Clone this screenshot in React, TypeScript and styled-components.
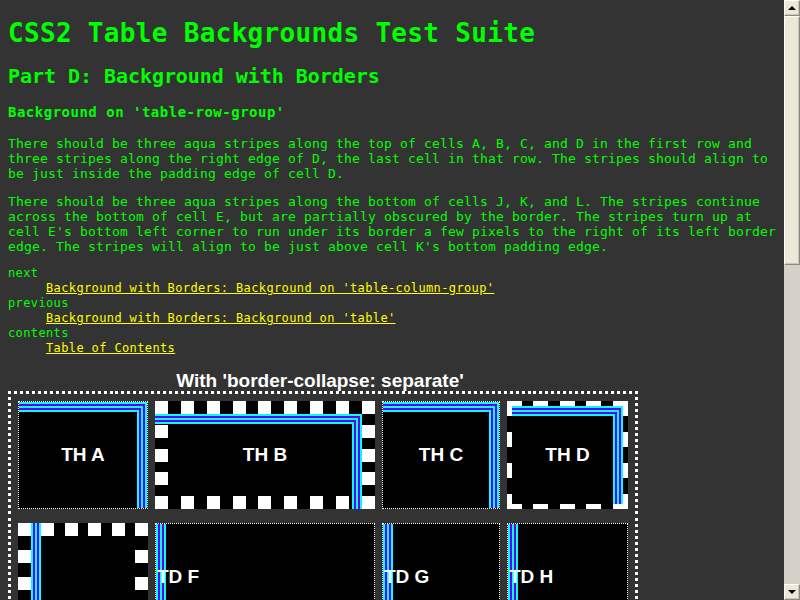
import styled, { createGlobalStyle } from "styled-components";

const CYAN = "#00ffff";
const VIOLET = "#6600ee";
const BANDS = [CYAN, VIOLET, CYAN, VIOLET, CYAN];

type Edge = "dotted" | "checker" | "dashed";
type Stripes = "corner" | "left";

interface CellSpec {
  id: string;
  label: string;
  head?: boolean;
  w: number;
  h: number;
  edge: Edge;
  stripes: Stripes;
  span?: number;
}

const EDGE_WIDTH: Record<Edge, number> = { dotted: 1, checker: 13, dashed: 5 };
const DASH: Record<Edge, number> = { dotted: 1, checker: 13, dashed: 15 };

const solid = (c: string) => `linear-gradient(${c}, ${c})`;

// evenly spaced dashes that start and end on a dash, like the old gecko borders
function dashEdges(w: number, h: number, bw: number, dash: number, color: string) {
  const period = (len: number) => {
    const n = Math.max(2, Math.round((len + dash) / (2 * dash)));
    return (len - dash) / (n - 1);
  };
  const hz = `repeating-linear-gradient(to right, ${color} 0 ${dash}px, transparent ${dash}px ${period(w)}px)`;
  const vt = `repeating-linear-gradient(to bottom, ${color} 0 ${dash}px, transparent ${dash}px ${period(h)}px)`;
  return [
    `${hz} 0 0 / 100% ${bw}px no-repeat`,
    `${hz} 0 100% / 100% ${bw}px no-repeat`,
    `${vt} 0 0 / ${bw}px 100% no-repeat`,
    `${vt} 100% 0 / ${bw}px 100% no-repeat`,
  ];
}

// three aqua stripes turning the top-right corner
function cornerStripes(t: number, r: number, l: number, b: number) {
  const layers = [
    `${solid("#000")} ${l}px ${t + 10}px / calc(100% - ${l + r + 10}px) calc(100% - ${t + b + 10}px) no-repeat`,
  ];
  for (let k = 4; k >= 0; k--) {
    layers.push(
      `${solid(BANDS[k])} ${l}px ${t + 2 * k}px / calc(100% - ${l + r + 2 * k}px) calc(100% - ${t + b + 2 * k}px) no-repeat`
    );
  }
  return layers;
}

function leftStripes(l: number, t: number, b: number) {
  const stops = BANDS.map((c, i) => `${c} ${i * 2}px ${i * 2 + 2}px`).join(", ");
  return [`linear-gradient(to right, ${stops}) ${l}px ${t}px / 10px calc(100% - ${t + b}px) no-repeat`];
}

function cellBackground(p: { $w: number; $h: number; $edge: Edge; $stripes: Stripes }) {
  const bw = EDGE_WIDTH[p.$edge];
  const border = p.$edge === "dotted" ? [] : dashEdges(p.$w, p.$h, bw, DASH[p.$edge], "#fff");
  let stripes: string[];
  if (p.$stripes === "left") {
    stripes = p.$edge === "dotted" ? leftStripes(1, 1, 1) : leftStripes(bw, 0, 0);
  } else if (p.$edge === "dotted") {
    stripes = cornerStripes(1, 1, 1, 1);
  } else if (p.$edge === "checker") {
    stripes = cornerStripes(bw, bw, 0, 0);
  } else {
    stripes = cornerStripes(bw, bw, bw, 0);
  }
  return [...border, ...stripes].join(",\n");
}

const tableOutline = dashEdges(630, 250, 3, 3, "#fff").join(",\n");

const GlobalStyle = createGlobalStyle`
  html, body {
    margin: 0;
    padding: 0;
    height: 100%;
    overflow: hidden;
    background: #333333;
  }
  #root {
    height: 100%;
  }
`;

const Window = styled.div`
  display: flex;
  height: 100vh;
  overflow: hidden;
  background: #333333;
`;

const Page = styled.main`
  flex: 1;
  min-width: 0;
  padding: 0 8px;
  overflow: hidden;
  color: #00ff00;
  font-family: "DejaVu Sans Mono", "Liberation Mono", monospace;
`;

const Title = styled.h1`
  margin: 18px 0 0;
  font-size: 26px;
  line-height: 30px;
  letter-spacing: 0.32px;
  font-weight: bold;
`;

const Part = styled.h2`
  margin: 16px 0 0;
  font-size: 20px;
  line-height: 24px;
  letter-spacing: -0.05px;
  font-weight: bold;
`;

const Section = styled.h3`
  margin: 16px 0 0;
  font-size: 14px;
  line-height: 17px;
  letter-spacing: 0.5px;
  font-weight: bold;
`;

const Para = styled.p`
  margin: 15px 0 0;
  font-size: 13px;
  line-height: 15px;
  letter-spacing: 0.173px;

  & + & {
    margin-top: 13px;
  }
`;

const NavList = styled.dl`
  margin: 12px 0 0;
  font-size: 12px;
  line-height: 15px;
  letter-spacing: 0.375px;

  dt {
    margin: 0;
  }
  dd {
    margin: 0 0 0 38px;
  }
`;

const NavLink = styled.a`
  color: #ffff00;
  text-decoration: underline;
`;

const Figure = styled.div`
  width: max-content;
  margin-top: 14px;
`;

const Caption = styled.div`
  text-align: center;
  padding-right: 6px;
  font-family: "Liberation Sans", Arial, sans-serif;
  font-weight: bold;
  font-size: 19px;
  line-height: 21px;
  color: #ffffff;
`;

const Table = styled.div`
  display: grid;
  grid-template-columns: 130px 220px 118px 121px;
  grid-template-rows: repeat(3, 108px);
  column-gap: 7px;
  row-gap: 14px;
  padding: 7px;
  border: 3px solid transparent;
  background: ${tableOutline};
  background-origin: border-box;
  background-clip: border-box;
`;

const Cell = styled.div<{ $w: number; $h: number; $edge: Edge; $stripes: Stripes; $head?: boolean; $span?: number }>`
  box-sizing: border-box;
  grid-row: span ${(p) => p.$span ?? 1};
  display: flex;
  align-items: center;
  justify-content: ${(p) => (p.$head ? "center" : "flex-start")};
  padding: 1px;
  border: ${(p) => (p.$edge === "dotted" ? "1px dotted #ffffff" : `${EDGE_WIDTH[p.$edge]}px solid transparent`)};
  background: ${(p) => cellBackground(p)};
  background-color: #000000;
  background-origin: border-box;
  background-clip: border-box;
  color: #ffffff;
  font-family: "Liberation Sans", Arial, sans-serif;
  font-weight: bold;
  font-size: 19px;
  line-height: 22px;
  white-space: nowrap;
`;

const Scrollbar = styled.div`
  flex: none;
  width: 16px;
  display: flex;
  flex-direction: column;
  background: #d5d1c9;
`;

const Raised = styled.div`
  box-sizing: border-box;
  flex: none;
  background: #ece9d8;
  border: 1px solid;
  border-color: #ffffff #8c8a80 #8c8a80 #ffffff;
  box-shadow: inset -1px -1px 0 #c9c6b8;
`;

const ArrowButton = styled(Raised)`
  height: 16px;
  display: flex;
  align-items: center;
  justify-content: center;
`;

const Arrow = styled.span<{ $down?: boolean }>`
  width: 0;
  height: 0;
  border-left: 4px solid transparent;
  border-right: 4px solid transparent;
  ${(p) => (p.$down ? "border-top: 4px solid #000;" : "border-bottom: 4px solid #000;")}
`;

const Thumb = styled(Raised)`
  height: 249px;
`;

const Track = styled.div`
  flex: 1;
`;

// cell E spans two rows; its label sits below the fold, so it stays empty here
const cells: CellSpec[] = [
  { id: "a", label: "TH A", head: true, w: 130, h: 108, edge: "dotted", stripes: "corner" },
  { id: "b", label: "TH B", head: true, w: 220, h: 108, edge: "checker", stripes: "corner" },
  { id: "c", label: "TH C", head: true, w: 118, h: 108, edge: "dotted", stripes: "corner" },
  { id: "d", label: "TH D", head: true, w: 121, h: 108, edge: "dashed", stripes: "corner" },
  { id: "e", label: "", w: 130, h: 230, edge: "checker", stripes: "left", span: 2 },
  { id: "f", label: "TD F", w: 220, h: 108, edge: "dotted", stripes: "left" },
  { id: "g", label: "TD G", w: 118, h: 108, edge: "dotted", stripes: "left" },
  { id: "h", label: "TD H", w: 121, h: 108, edge: "dotted", stripes: "left" },
];

export default function App() {
  return (
    <Window>
      <GlobalStyle />
      <Page>
        <Title>CSS2 Table Backgrounds Test Suite</Title>
        <Part>Part D: Background with Borders</Part>
        <Section>Background on 'table-row-group'</Section>
        <Para>
          There should be three aqua stripes along the top of cells A, B, C, and D in the first row and three
          stripes along the right edge of D, the last cell in that row. The stripes should align to be just
          inside the padding edge of cell D.
        </Para>
        <Para>
          There should be three aqua stripes along the bottom of cells J, K, and L. The stripes continue across
          the bottom of cell E, but are partially obscured by the border. The stripes turn up at cell E's
          bottom left corner to run under its border a few pixels to the right of its left border edge. The
          stripes will align to be just above cell K's bottom padding edge.
        </Para>
        <NavList>
          <dt>next</dt>
          <dd>
            <NavLink href="#">Background with Borders: Background on 'table-column-group'</NavLink>
          </dd>
          <dt>previous</dt>
          <dd>
            <NavLink href="#">Background with Borders: Background on 'table'</NavLink>
          </dd>
          <dt>contents</dt>
          <dd>
            <NavLink href="#">Table of Contents</NavLink>
          </dd>
        </NavList>
        <Figure>
          <Caption>With 'border-collapse: separate'</Caption>
          <Table>
            {cells.map((c) => (
              <Cell
                key={c.id}
                $w={c.w}
                $h={c.h}
                $edge={c.edge}
                $stripes={c.stripes}
                $head={c.head}
                $span={c.span}
              >
                {c.label}
              </Cell>
            ))}
          </Table>
        </Figure>
      </Page>
      <Scrollbar>
        <ArrowButton>
          <Arrow />
        </ArrowButton>
        <Thumb />
        <Track />
        <ArrowButton>
          <Arrow $down />
        </ArrowButton>
      </Scrollbar>
    </Window>
  );
}
